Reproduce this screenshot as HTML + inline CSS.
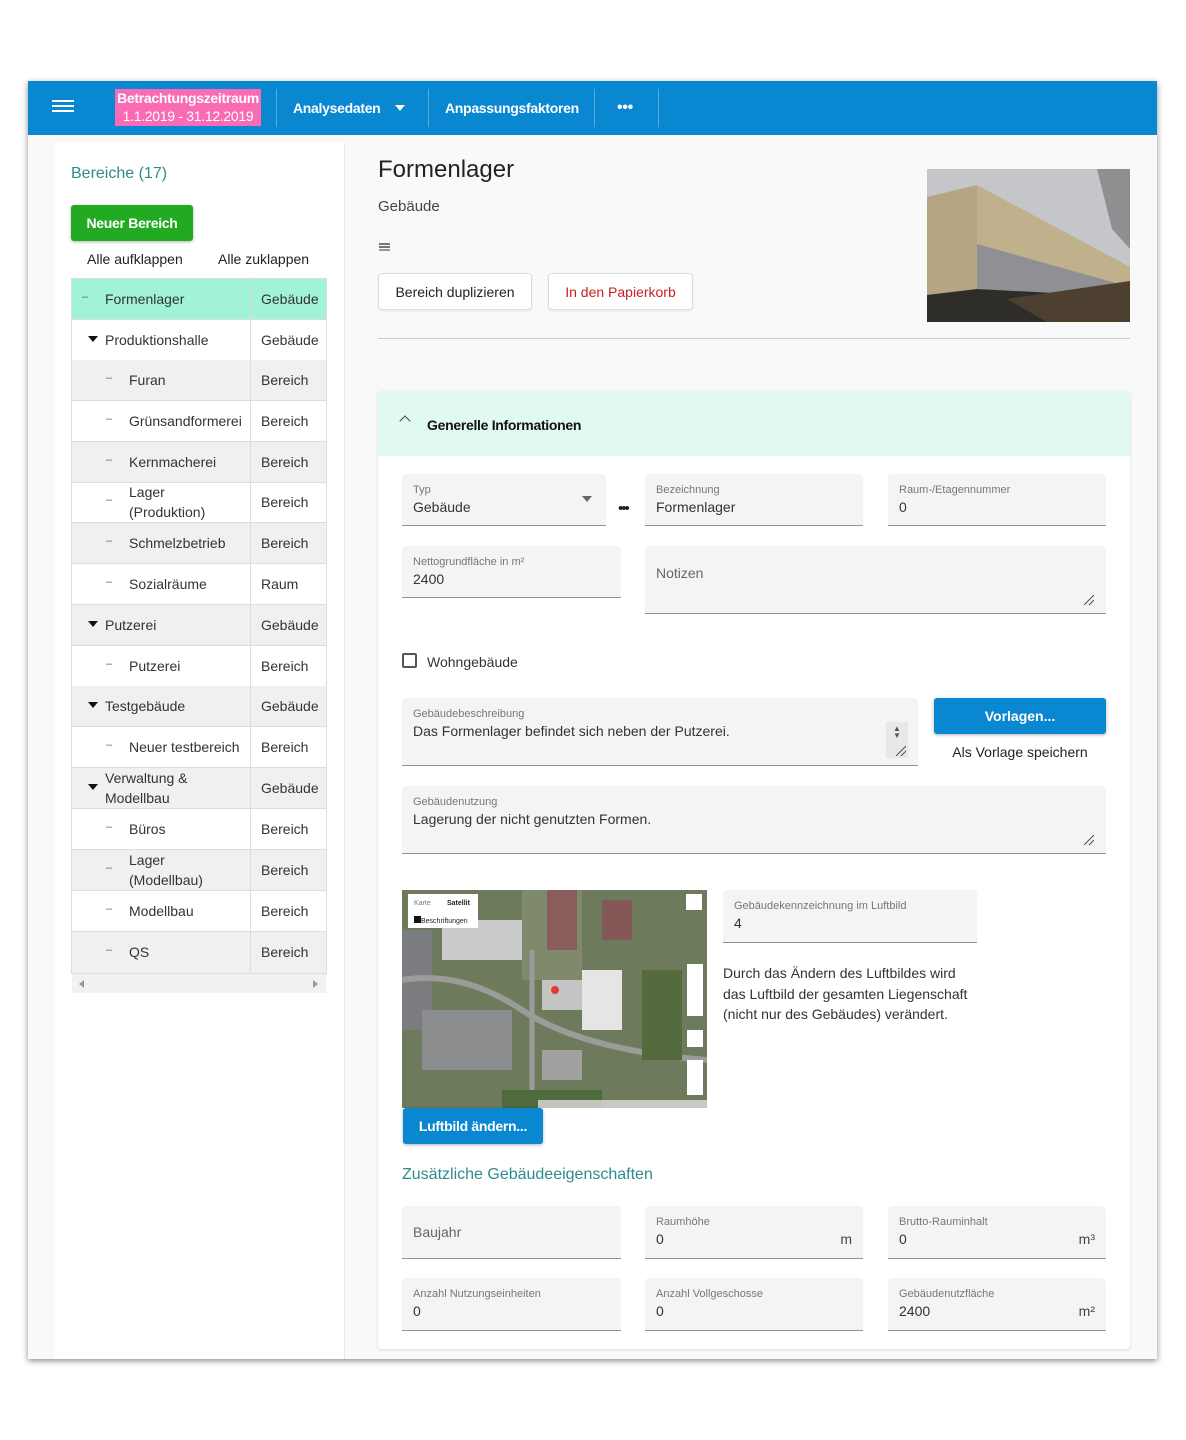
<!DOCTYPE html>
<html><head><meta charset="utf-8"><style>
*{box-sizing:border-box;margin:0;padding:0}
body{width:1186px;height:1440px;background:#fff;font-family:"Liberation Sans",sans-serif;position:relative;overflow:hidden;color:#333}
.a{position:absolute}
#app{position:absolute;left:28px;top:81px;width:1129px;height:1278px;background:#f9f9f9;box-shadow:0 2px 6px rgba(0,0,0,.45)}
#bar{position:absolute;left:28px;top:81px;width:1129px;height:54px;background:#0a87d1}
.nav{position:absolute;top:81px;height:54px;line-height:54px;color:#fff;font-weight:bold;font-size:14px;letter-spacing:-.3px}
.sep{position:absolute;top:89px;width:1px;height:38px;background:rgba(255,255,255,.3)}
#left{position:absolute;left:55px;top:143px;width:290px;height:1216px;background:#fff;border-right:1px solid #e6e6e6}
.row{position:absolute;left:72px;width:254px;height:41px;border-bottom:1px solid #ddd;font-size:14px;color:#333}
.row .n{position:absolute;top:0;height:40px;display:flex;align-items:center;line-height:20px}
.row .t{position:absolute;left:189px;top:0;height:40px;line-height:40px}
.row .c{position:absolute;left:178px;top:0;width:1px;height:40px;background:#ddd}
.g{background:#f0f0f0}
.dash{position:absolute;top:12px;font-size:11px;color:#666}
.tri{position:absolute;left:16px;top:16px;width:0;height:0;border-left:5px solid transparent;border-right:5px solid transparent;border-top:6px solid #111}
.f{position:absolute;background:#f4f4f4;border-bottom:1px solid #949494;border-radius:4px 4px 0 0}
.f .l{position:absolute;left:11px;top:10px;font-size:11px;color:#777}
.f .v{position:absolute;left:11px;top:25px;font-size:14px;color:#333}
.f .u{position:absolute;right:11px;top:25px;font-size:14px;color:#444}
.btn{position:absolute;border:1px solid #ddd;border-radius:4px;background:#fff;font-size:14px;text-align:center;box-shadow:0 1px 2px rgba(0,0,0,.08)}
.rs{position:absolute;width:10px;height:10px;background:linear-gradient(135deg,transparent 45%,#555 46%,#555 54%,transparent 55%,transparent 70%,#555 71%,#555 79%,transparent 80%)}
</style></head><body>
<div id="app"></div>
<div id="bar"></div>
<div class="a" style="left:52px;top:100px;width:22px;height:2px;background:#fff;box-shadow:0 5px 0 #fff,0 10px 0 #fff"></div>
<div class="a" style="left:115px;top:89px;width:146px;height:37px;background:#f96bb4;color:#fff;font-size:14px;line-height:18px;text-align:center;letter-spacing:-.3px"><b>Betrachtungszeitraum</b><br>1.1.2019 - 31.12.2019</div>
<div class="sep" style="left:276px"></div>
<div class="nav" style="left:293px">Analysedaten</div>
<div class="a" style="left:395px;top:105px;border-left:5px solid transparent;border-right:5px solid transparent;border-top:6px solid #fff"></div>
<div class="sep" style="left:428px"></div>
<div class="nav" style="left:445px">Anpassungsfaktoren</div>
<div class="sep" style="left:594px"></div>
<div class="nav" style="left:617px;font-size:16px">•••</div>
<div class="sep" style="left:658px"></div>

<div id="left"></div>
<div class="a" style="left:71px;top:165px;font-size:16px;color:#2e8b8b">Bereiche (17)</div>
<div class="a" style="left:71px;top:205px;width:122px;height:36px;background:#22aa22;border-radius:3px;color:#fff;font-weight:bold;font-size:14px;line-height:36px;text-align:center;box-shadow:0 1px 3px rgba(0,0,0,.3);letter-spacing:-.3px">Neuer Bereich</div>
<div class="a" style="left:87px;top:251px;font-size:14px;color:#222">Alle aufklappen</div>
<div class="a" style="left:218px;top:251px;font-size:14px;color:#222">Alle zuklappen</div>
<div class="a" style="left:71px;top:278px;width:256px;height:696px;border:1px solid #ddd"></div>

<div class="row" style="top:279px;background:#a0f3d9"><span class="dash" style="left:10px">–</span><div class="n" style="left:33px">Formenlager</div><div class="c"></div><div class="t">Gebäude</div></div>
<div class="row" style="top:320px"><span class="tri"></span><div class="n" style="left:33px">Produktionshalle</div><div class="c"></div><div class="t">Gebäude</div></div>
<div class="row g" style="top:360px"><span class="dash" style="left:34px">–</span><div class="n" style="left:57px">Furan</div><div class="c"></div><div class="t">Bereich</div></div>
<div class="row" style="top:401px"><span class="dash" style="left:34px">–</span><div class="n" style="left:57px">Grünsandformerei</div><div class="c"></div><div class="t">Bereich</div></div>
<div class="row g" style="top:442px"><span class="dash" style="left:34px">–</span><div class="n" style="left:57px">Kernmacherei</div><div class="c"></div><div class="t">Bereich</div></div>
<div class="row" style="top:482px"><span class="dash" style="left:34px">–</span><div class="n" style="left:57px">Lager<br>(Produktion)</div><div class="c"></div><div class="t">Bereich</div></div>
<div class="row g" style="top:523px"><span class="dash" style="left:34px">–</span><div class="n" style="left:57px">Schmelzbetrieb</div><div class="c"></div><div class="t">Bereich</div></div>
<div class="row" style="top:564px"><span class="dash" style="left:34px">–</span><div class="n" style="left:57px">Sozialräume</div><div class="c"></div><div class="t">Raum</div></div>
<div class="row g" style="top:605px"><span class="tri"></span><div class="n" style="left:33px">Putzerei</div><div class="c"></div><div class="t">Gebäude</div></div>
<div class="row" style="top:646px"><span class="dash" style="left:34px">–</span><div class="n" style="left:57px">Putzerei</div><div class="c"></div><div class="t">Bereich</div></div>
<div class="row g" style="top:686px"><span class="tri"></span><div class="n" style="left:33px">Testgebäude</div><div class="c"></div><div class="t">Gebäude</div></div>
<div class="row" style="top:727px"><span class="dash" style="left:34px">–</span><div class="n" style="left:57px">Neuer testbereich</div><div class="c"></div><div class="t">Bereich</div></div>
<div class="row g" style="top:768px"><span class="tri"></span><div class="n" style="left:33px">Verwaltung &amp;<br>Modellbau</div><div class="c"></div><div class="t">Gebäude</div></div>
<div class="row" style="top:809px"><span class="dash" style="left:34px">–</span><div class="n" style="left:57px">Büros</div><div class="c"></div><div class="t">Bereich</div></div>
<div class="row g" style="top:850px"><span class="dash" style="left:34px">–</span><div class="n" style="left:57px">Lager<br>(Modellbau)</div><div class="c"></div><div class="t">Bereich</div></div>
<div class="row" style="top:891px"><span class="dash" style="left:34px">–</span><div class="n" style="left:57px">Modellbau</div><div class="c"></div><div class="t">Bereich</div></div>
<div class="row g" style="top:932px;border-bottom:none"><span class="dash" style="left:34px">–</span><div class="n" style="left:57px">QS</div><div class="c"></div><div class="t">Bereich</div></div>
<div class="a" style="left:72px;top:974px;width:254px;height:19px;background:#f1f1f1"></div>
<div class="a" style="left:79px;top:980px;border-top:4px solid transparent;border-bottom:4px solid transparent;border-right:5px solid #999"></div>
<div class="a" style="left:313px;top:980px;border-top:4px solid transparent;border-bottom:4px solid transparent;border-left:5px solid #999"></div>

<div class="a" style="left:378px;top:156px;font-size:24px;color:#222">Formenlager</div>
<div class="a" style="left:378px;top:198px;font-size:15px;color:#444">Gebäude</div>
<div class="a" style="left:379px;top:243px;width:11px;height:1.5px;background:#777;box-shadow:0 3px 0 #777,-0px 6px 0 #999"></div>
<div class="btn" style="left:378px;top:273px;width:154px;height:37px;line-height:36px;color:#222">Bereich duplizieren</div>
<div class="btn" style="left:548px;top:273px;width:145px;height:37px;line-height:36px;color:#c62020">In den Papierkorb</div>
<div class="a" style="left:927px;top:169px;width:203px;height:153px;background:#c4c6c9;overflow:hidden">
<svg width="203" height="153"><polygon points="0,28 50,16 50,120 0,128" fill="#b5a582"/><polygon points="50,16 203,98 203,128 50,122" fill="#c0b08c"/><polygon points="50,75 203,118 203,130 50,120" fill="#8e9093"/><polygon points="0,126 50,120 203,128 203,153 0,153" fill="#2f2d2a"/><polygon points="80,130 203,112 203,153 120,153" fill="#4e4030"/><polygon points="170,0 203,0 203,80 185,60" fill="#6a6a6c" opacity=".6"/></svg></div>
<div class="a" style="left:378px;top:338px;width:752px;height:1px;background:#ccc"></div>

<div class="a" style="left:378px;top:391px;width:752px;height:958px;background:#fff;box-shadow:0 1px 3px rgba(0,0,0,.12);border-radius:4px"></div>
<div class="a" style="left:378px;top:391px;width:752px;height:65px;background:#e0faf2;border-radius:4px 4px 0 0"></div>
<div class="a" style="left:401px;top:417px;width:8px;height:8px;border-left:1.5px solid #444;border-top:1.5px solid #444;transform:rotate(45deg)"></div>
<div class="a" style="left:427px;top:417px;font-size:14px;font-weight:bold;color:#111;letter-spacing:-.3px">Generelle Informationen</div>

<div class="f" style="left:402px;top:474px;width:204px;height:52px"><span class="l">Typ</span><span class="v">Gebäude</span><span class="a" style="right:14px;top:22px;border-left:5px solid transparent;border-right:5px solid transparent;border-top:6px solid #666"></span></div>
<div class="a" style="left:618px;top:500px;font-size:15px;color:#222;letter-spacing:-2px">•••</div>
<div class="f" style="left:645px;top:474px;width:218px;height:52px"><span class="l">Bezeichnung</span><span class="v">Formenlager</span></div>
<div class="f" style="left:888px;top:474px;width:218px;height:52px"><span class="l">Raum-/Etagennummer</span><span class="v">0</span></div>
<div class="f" style="left:402px;top:546px;width:219px;height:52px"><span class="l">Nettogrundfläche in m²</span><span class="v">2400</span></div>
<div class="f" style="left:645px;top:546px;width:461px;height:68px"><span class="v" style="top:19px;color:#666">Notizen</span><span class="rs" style="right:12px;bottom:8px"></span></div>
<div class="a" style="left:402px;top:653px;width:15px;height:15px;border:2px solid #555;border-radius:2px"></div>
<div class="a" style="left:427px;top:654px;font-size:14px;color:#333">Wohngebäude</div>
<div class="f" style="left:402px;top:698px;width:516px;height:68px"><span class="l">Gebäudebeschreibung</span><span class="v" style="font-size:14px">Das Formenlager befindet sich neben der Putzerei.</span><span class="a" style="left:484px;top:24px;width:22px;height:36px;background:#e8e8e8"></span><span class="a" style="left:491px;top:27px;font-size:8px;color:#555;line-height:7px">▲<br>▼</span><span class="rs" style="left:494px;top:48px"></span></div>
<div class="a" style="left:934px;top:698px;width:172px;height:36px;background:#0a87d1;border-radius:3px;color:#fff;font-weight:bold;font-size:14px;line-height:36px;text-align:center;box-shadow:0 1px 3px rgba(0,0,0,.3)">Vorlagen...</div>
<div class="a" style="left:934px;top:744px;width:172px;text-align:center;font-size:14px;color:#222">Als Vorlage speichern</div>
<div class="f" style="left:402px;top:786px;width:704px;height:68px"><span class="l">Gebäudenutzung</span><span class="v">Lagerung der nicht genutzten Formen.</span><span class="rs" style="right:12px;bottom:8px"></span></div>

<div class="a" style="left:402px;top:890px;width:305px;height:218px;background:#6d7560;overflow:hidden">
<svg width="305" height="218"><rect width="305" height="218" fill="#6e7a5c"/><rect x="40" y="30" width="80" height="40" fill="#c9cbcc"/><rect x="120" y="0" width="60" height="90" fill="#7f8a6c"/><rect x="180" y="80" width="40" height="60" fill="#e5e5e5"/><rect x="0" y="40" width="30" height="100" fill="#7a7c80"/><rect x="145" y="0" width="30" height="60" fill="#8c4a55" opacity=".7"/><rect x="200" y="10" width="30" height="40" fill="#8c4a55" opacity=".7"/><rect x="20" y="120" width="90" height="60" fill="#8a8c8e"/><rect x="140" y="90" width="40" height="30" fill="#c4c4c4"/><rect x="140" y="160" width="40" height="30" fill="#9fa0a0"/><path d="M0,90 Q60,80 120,120 T305,170" stroke="#9a9c9a" stroke-width="6" fill="none"/><path d="M130,60 L130,210" stroke="#9a9c9a" stroke-width="5"/><rect x="100" y="200" width="100" height="18" fill="#4f6a3c"/><rect x="240" y="80" width="40" height="90" fill="#556b3e"/><circle cx="153" cy="100" r="4" fill="#e53935"/><rect x="6" y="4" width="70" height="34" fill="#fff"/><text x="12" y="15" font-size="7" fill="#777" font-family="Liberation Sans">Karte</text><text x="45" y="15" font-size="7" font-weight="bold" fill="#222" font-family="Liberation Sans">Satellit</text><rect x="12" y="26" width="7" height="7" fill="#111"/><text x="19" y="33" font-size="7" fill="#222" font-family="Liberation Sans">Beschriftungen</text><rect x="284" y="4" width="16" height="16" fill="#fff"/><rect x="285" y="74" width="16" height="52" fill="#fff"/><rect x="285" y="140" width="16" height="17" fill="#fff"/><rect x="285" y="170" width="16" height="35" fill="#fff"/><rect x="136" y="210" width="169" height="8" fill="#ddd" opacity=".8"/></svg></div>
<div class="a" style="left:403px;top:1108px;width:140px;height:36px;background:#0a87d1;border-radius:3px;color:#fff;font-weight:bold;font-size:14px;line-height:36px;text-align:center;box-shadow:0 1px 3px rgba(0,0,0,.3);letter-spacing:-.3px">Luftbild ändern...</div>
<div class="f" style="left:723px;top:890px;width:254px;height:53px"><span class="l">Gebäudekennzeichnung im Luftbild</span><span class="v">4</span></div>
<div class="a" style="left:723px;top:963px;width:255px;font-size:14px;line-height:20.5px;color:#333">Durch das Ändern des Luftbildes wird das Luftbild der gesamten Liegenschaft (nicht nur des Gebäudes) verändert.</div>

<div class="a" style="left:402px;top:1166px;font-size:16px;color:#2e8b8b">Zusätzliche Gebäudeeigenschaften</div>
<div class="f" style="left:402px;top:1206px;width:219px;height:53px"><span class="v" style="top:18px;color:#666">Baujahr</span></div>
<div class="f" style="left:645px;top:1206px;width:218px;height:53px"><span class="l">Raumhöhe</span><span class="v">0</span><span class="u">m</span></div>
<div class="f" style="left:888px;top:1206px;width:218px;height:53px"><span class="l">Brutto-Rauminhalt</span><span class="v">0</span><span class="u">m³</span></div>
<div class="f" style="left:402px;top:1278px;width:219px;height:53px"><span class="l">Anzahl Nutzungseinheiten</span><span class="v">0</span></div>
<div class="f" style="left:645px;top:1278px;width:218px;height:53px"><span class="l">Anzahl Vollgeschosse</span><span class="v">0</span></div>
<div class="f" style="left:888px;top:1278px;width:218px;height:53px"><span class="l">Gebäudenutzfläche</span><span class="v">2400</span><span class="u">m²</span></div>
</body></html>
